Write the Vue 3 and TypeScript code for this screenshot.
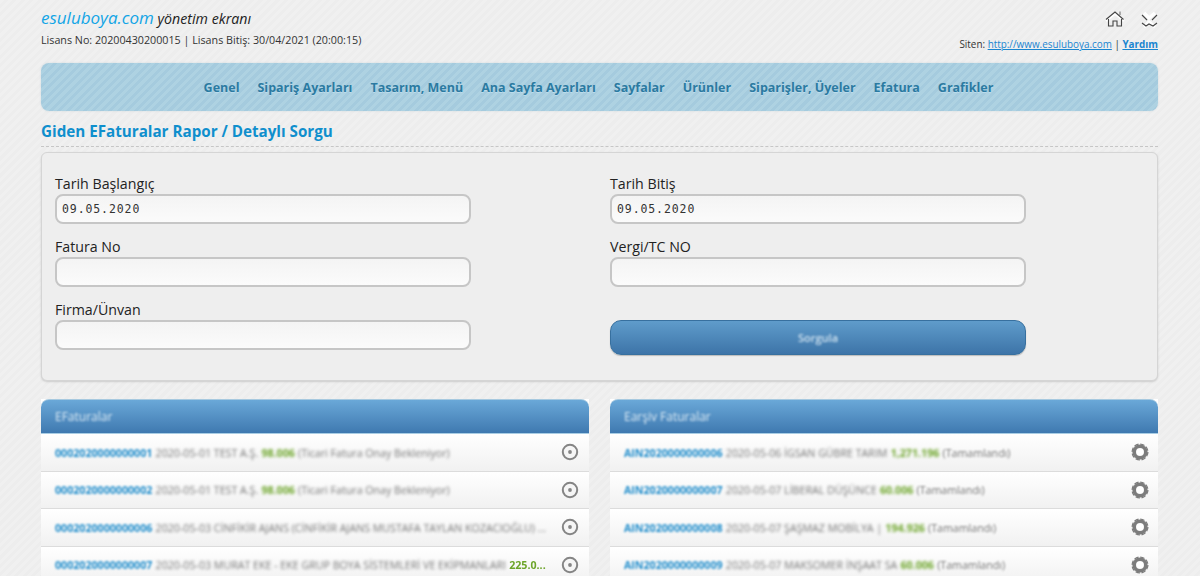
<template>
  <div class="page">
    <header class="top">
      <div>
        <div class="brand"><span class="brand-name">esuluboya.com</span> yönetim ekranı</div>
        <div class="license">Lisans No: 20200430200015 | Lisans Bitiş: 30/04/2021 (20:00:15)</div>
      </div>
      <div class="top-right">
        <div class="top-icons">
          <svg width="20" height="18" viewBox="0 0 20 18" fill="none" stroke="#444" stroke-width="1.1">
            <path d="M1 10 10 2.500 19 10" stroke="#fff" stroke-width="2.500" transform="translate(0 1)" />
            <path d="M1 9.500 10 2l8.500 7.500" />
            <path d="M15 5V1.500" stroke-width="0.8" />
            <path d="M3.500 9v7H8v-5h4v5h4.500V9" />
          </svg>
          <svg width="18" height="18" viewBox="0 0 18 18" fill="none">
            <path d="M4 3l5 5 6-5M4 17l5-5 6 5" stroke="#fff" stroke-width="3.500" />
            <path d="M2 5l5 5M17 5l-5 5M2 13l4 3 3-2 4 2 4-3" stroke="#444" stroke-width="1.100" />
          </svg>
        </div>
        <div class="site">Siten: <a href="#">http://www.esuluboya.com</a> | <a href="#" class="help">Yardım</a></div>
      </div>
    </header>

    <nav class="menu">
      <a v-for="item in menu" :key="item" href="#">{{ item }}</a>
    </nav>

    <h1 class="title">Giden EFaturalar Rapor / Detaylı Sorgu</h1>

    <section class="query">
      <div class="field">
        <label>Tarih Başlangıç</label>
        <input class="date" value="09.05.2020" />
      </div>
      <div class="field">
        <label>Tarih Bitiş</label>
        <input class="date" value="09.05.2020" />
      </div>
      <div class="field">
        <label>Fatura No</label>
        <input />
      </div>
      <div class="field">
        <label>Vergi/TC NO</label>
        <input />
      </div>
      <div class="field">
        <label>Firma/Ünvan</label>
        <input />
      </div>
      <div class="field submit">
        <button type="button"><span>Sorgula</span></button>
      </div>
    </section>

    <div class="panels">
      <section v-for="panel in panels" :key="panel.title" class="panel">
        <div class="panel-head"><span>{{ panel.title }}</span></div>
        <div v-for="row in panel.rows" :key="row.no" class="row">
          <div class="row-text">
            <b class="no">{{ row.no }}</b>
            <span class="info">{{ row.info }}</span>
            <b v-if="row.amount" class="amount" :class="{ sharp: row.sharp }">{{ row.amount }}</b>
            <span v-if="row.status" class="info" :class="{ sharper: panel.gear }">{{ row.status }}</span>
          </div>
          <svg v-if="panel.gear" class="row-icon gear" width="18" height="18" viewBox="0 0 18 18">
            <circle cx="9" cy="9" r="5.800" fill="none" stroke="#7c7c7c" stroke-width="3.600" />
            <circle cx="9" cy="9" r="7.900" fill="none" stroke="#7c7c7c" stroke-width="1.300" stroke-dasharray="4.500 1.700" />
            <circle cx="9" cy="9" r="3.200" fill="#fff" />
          </svg>
          <svg v-else class="row-icon" width="18" height="18" viewBox="0 0 18 18">
            <circle cx="9" cy="9" r="7.200" fill="#f6f6f6" stroke="#858585" stroke-width="2" />
            <circle cx="9" cy="9" r="1.900" fill="#858585" />
          </svg>
        </div>
      </section>
    </div>
  </div>
</template>

<script setup lang="ts">
interface Row {
  no: string
  info: string
  amount?: string
  status?: string
  sharp?: boolean
}

const menu = [
  'Genel',
  'Sipariş Ayarları',
  'Tasarım, Menü',
  'Ana Sayfa Ayarları',
  'Sayfalar',
  'Ürünler',
  'Siparişler, Üyeler',
  'Efatura',
  'Grafikler'
]

const panels: { title: string; gear: boolean; rows: Row[] }[] = [
  {
    title: 'EFaturalar',
    gear: false,
    rows: [
      { no: '0002020000000001', info: '2020-05-01 TEST A.Ş.', amount: '98.006', status: '(Ticari Fatura Onay Bekleniyor)' },
      { no: '0002020000000002', info: '2020-05-01 TEST A.Ş.', amount: '98.006', status: '(Ticari Fatura Onay Bekleniyor)' },
      { no: '0002020000000006', info: '2020-05-03 CİNFİKİR AJANS (CİNFİKİR AJANS MUSTAFA TAYLAN KOZACIOĞLU) ...' },
      { no: '0002020000000007', info: '2020-05-03 MURAT EKE - EKE GRUP BOYA SİSTEMLERİ VE EKİPMANLARI', amount: '225.0...', sharp: true }
    ]
  },
  {
    title: 'Earşiv Faturalar',
    gear: true,
    rows: [
      { no: 'AIN2020000000006', info: '2020-05-06 İGSAN GÜBRE TARIM', amount: '1,271.196', status: '(Tamamlandı)' },
      { no: 'AIN2020000000007', info: '2020-05-07 LİBERAL DÜŞÜNCE', amount: '60.006', status: '(Tamamlandı)' },
      { no: 'AIN2020000000008', info: '2020-05-07 ŞAŞMAZ MOBİLYA |', amount: '194.926', status: '(Tamamlandı)' },
      { no: 'AIN2020000000009', info: '2020-05-07 MAKSOMER İNŞAAT SA', amount: '60.006', status: '(Tamamlandı)' }
    ]
  }
]
</script>

<style>
html,
body {
  margin: 0;
  height: 576px;
  overflow: hidden;
}
</style>

<style scoped>
.page {
  box-sizing: border-box;
  height: 576px;
  overflow: hidden;
  padding: 0 42px 0 41px;
  font-family: 'Open Sans', 'Noto Sans', sans-serif;
  color: #222;
  background: repeating-linear-gradient(135deg, #f0f0f0 0 3px, #ededed 3px 6px);
}

.top {
  display: flex;
  justify-content: space-between;
  height: 63px;
}

.brand {
  margin-top: 7px;
  font-size: 14.200px;
  line-height: 22px;
  font-style: italic;
  color: #222;
}

.brand-name {
  font-size: 17px;
  color: #12a5e6;
}

.license {
  margin-top: 2px;
  font-size: 10.730px;
  line-height: 16px;
  color: #333;
}

.top-right {
  display: flex;
  flex-direction: column;
  align-items: flex-end;
}

.top-icons {
  display: flex;
  gap: 15px;
  margin-top: 10px;
  height: 18px;
}

.site {
  margin-top: 9px;
  font-size: 9.900px;
  line-height: 14px;
  color: #333;
}

.site a {
  color: #1a85d0;
}

.site .help {
  font-weight: 700;
}

.menu {
  display: flex;
  justify-content: center;
  align-items: center;
  gap: 18px;
  height: 48px;
  box-sizing: border-box;
  padding-right: 2px;
  border-radius: 8px;
  background: repeating-linear-gradient(135deg, #aed2e2 0 3px, #a5cbde 3px 6px);
  box-shadow: 0 0 2px #ccd8de;
}

.menu a {
  font-size: 12.500px;
  font-weight: 700;
  color: #2b7aa1;
  text-decoration: none;
  text-shadow: 0 1px 0 #bcdcec;
}

.title {
  margin: 10px 0 0;
  padding-bottom: 5px;
  border-bottom: 1px dashed #c6c6c6;
  font-size: 15.200px;
  line-height: 20px;
  font-weight: 700;
  color: #0f8fcd;
}

.query {
  display: grid;
  grid-template-columns: 416px 416px;
  column-gap: 139px;
  grid-auto-rows: 63.500px;
  box-sizing: border-box;
  height: 229px;
  margin-top: 5px;
  padding: 21px 13px 0;
  background: #eee;
  border: 1px solid #d5d5d5;
  border-radius: 6px;
  box-shadow: 0 1px 2px #ccc;
}

.field label {
  display: block;
  font-size: 14.200px;
  line-height: 19px;
  color: #222;
}

.field:nth-child(n + 3) label {
  margin-top: -1px;
  margin-bottom: 1px;
}

.field input {
  display: block;
  box-sizing: border-box;
  width: 100%;
  height: 30px;
  margin-top: 1px;
  padding: 0 5px;
  font-family: 'DejaVu Sans Mono', monospace;
  font-size: 11.500px;
  letter-spacing: 0.900px;
  color: #333;
  background: linear-gradient(#f4f4f4, #fbfbfb);
  border: 2px solid #c6c6c6;
  border-radius: 8px;
  outline: none;
}

.submit {
  padding-top: 19px;
}

.submit button {
  display: flex;
  align-items: center;
  justify-content: center;
  box-sizing: border-box;
  width: 100%;
  height: 35px;
  font-family: inherit;
  font-size: 11px;
  font-weight: 600;
  color: #cfe2f0;
  background: linear-gradient(#5f9ccb, #3d74a8);
  border: 1px solid #37709f;
  border-radius: 11px;
  box-shadow: 0 1px 1px #bbb;
}

.submit span {
  filter: blur(1px);
}

.panels {
  display: grid;
  grid-template-columns: 548px 548px;
  column-gap: 21px;
  margin-top: 18px;
}

.panel {
  background: #fff;
}

.panel-head {
  box-sizing: border-box;
  height: 35px;
  padding: 0 14px;
  font-size: 12px;
  line-height: 34px;
  color: #dcebf5;
  background: linear-gradient(#6aa8d8, #3f79b0);
  border-top: 1px solid #a7c9df;
  border-bottom: 1px solid #a9cde4;
  border-radius: 8px 8px 0 0;
}

.panel-head span {
  display: inline-block;
  filter: blur(1px);
}

.row {
  display: flex;
  align-items: center;
  justify-content: space-between;
  box-sizing: border-box;
  height: 37.500px;
  padding: 0 10px 0 14px;
  background: linear-gradient(#fff, #f1f1f1);
  border-bottom: 1px solid #dcdcdc;
}

.row-text {
  display: flex;
  gap: 3.200px;
  padding-top: 1px;
  font-size: 10.650px;
  white-space: nowrap;
}

.no {
  color: #1e8ccb;
  filter: blur(1px);
}

.info {
  color: #777;
  filter: blur(1.400px);
}

.sharper {
  filter: blur(0.800px);
}

.amount {
  color: #6da52a;
  filter: blur(1.400px);
}

.amount.sharp {
  filter: blur(0.300px);
}

.row-icon {
  flex: none;
}

.gear {
  margin-right: -1px;
}
</style>
